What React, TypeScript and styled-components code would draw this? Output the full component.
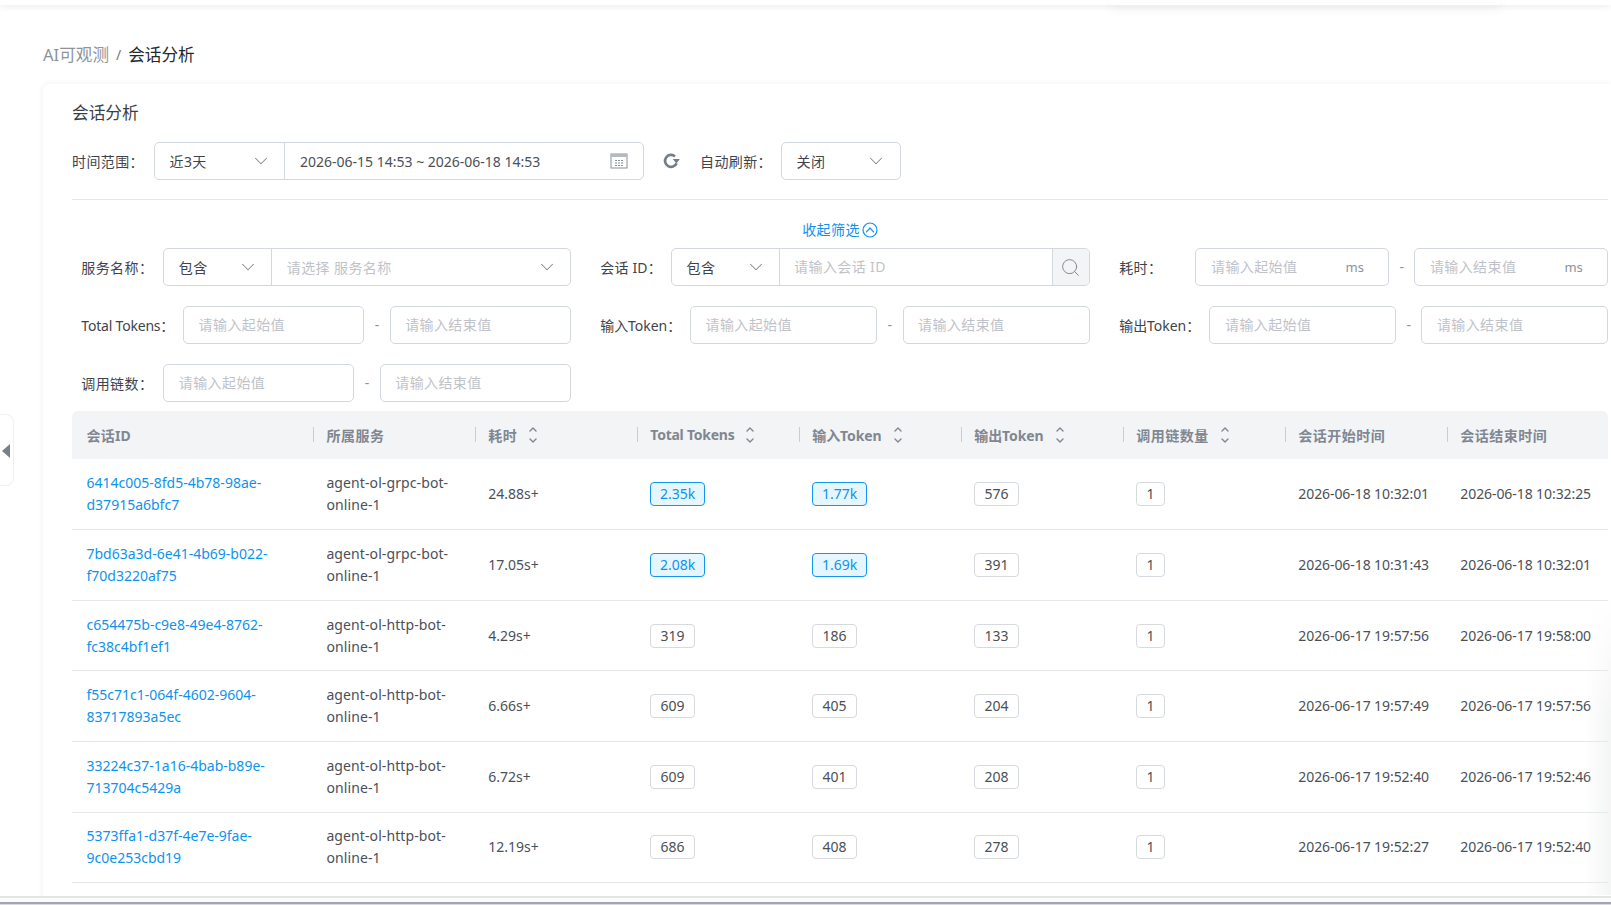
import React from 'react';
import styled, { createGlobalStyle } from 'styled-components';
import { ChevronDown, Search } from 'lucide-react';

const FONT = '"Noto Sans", "Noto Sans CJK SC", sans-serif';

const Global = createGlobalStyle`
  html, body { margin: 0; padding: 0; background: #fff; overflow: hidden; }
  * { box-sizing: border-box; }
  body { font-family: ${FONT}; font-size: 14px; color: #4b5058; }
`;

const Page = styled.div`
  position: relative;
  width: 1611px;
  height: 905px;
  display: flex;
  flex-direction: column;
  overflow: hidden;
`;
const TopBar = styled.div`
  position: relative;
  flex: none;
  height: 5px;
  background: #fff;
  box-shadow: 0 1px 7px rgba(0, 0, 0, 0.1);
  z-index: 2;
  &::after {
    content: '';
    position: absolute;
    left: 1110px;
    width: 390px;
    top: 0;
    height: 5px;
    box-shadow: 0 3px 12px rgba(0, 0, 0, 0.08);
  }
`;
const Main = styled.main`
  flex: 1;
  min-height: 0;
  padding-left: 43px;
  overflow: hidden;
`;
const Crumbs = styled.nav`
  display: flex;
  align-items: center;
  height: 24px;
  margin: 38px 0 17px;
  font-size: 16.6px;
  line-height: 24px;
  color: #8d939c;
`;
const CrumbSep = styled.span`
  margin: 0 7px;
  color: #707680;
  font-size: 14px;
`;
const CrumbNow = styled.span`
  color: #23272e;
`;
const Card = styled.section`
  height: 830px;
  padding: 17px 3px 0 29px;
  background: #fff;
  border-radius: 6px 0 0 0;
  box-shadow: 0 0 6px rgba(0, 0, 0, 0.07);
`;
const Title = styled.h2`
  margin: 0 0 17px;
  font-size: 16.7px;
  font-weight: 400;
  line-height: 24px;
  color: #3a3f46;
`;
const TimeRow = styled.div`
  display: flex;
  align-items: center;
  height: 38px;
`;
const Label = styled.label<{ $w: number; $ls?: number }>`
  flex: none;
  width: ${(p) => p.$w}px;
  padding-bottom: 1px;
  color: #3f444b;
  font-size: 14px;
  letter-spacing: ${(p) => p.$ls ?? 0.4}px;
  white-space: nowrap;
`;
const Group = styled.div<{ $w?: number }>`
  display: flex;
  height: 38px;
  border: 1px solid #d3d8de;
  border-radius: 5px;
  background: #fff;
  overflow: hidden;
  ${(p) => (p.$w ? `flex: none; width: ${p.$w}px;` : 'flex: 1; min-width: 0;')}
`;
const SelectPart = styled.div<{ $w?: number; $right?: number }>`
  display: flex;
  align-items: center;
  justify-content: space-between;
  padding: 0 ${(p) => p.$right ?? 12}px 1px 14.5px;
  color: #3f444b;
  letter-spacing: 0.4px;
  ${(p) => (p.$w ? `flex: none; width: ${p.$w}px; border-right: 1px solid #d3d8de;` : 'flex: 1;')}
  &:last-child { border-right: 0; }
`;
const Placeholder = styled.span`
  color: #bfc3c9;
`;
const DatePart = styled.div`
  flex: 1;
  display: flex;
  align-items: center;
  justify-content: space-between;
  padding: 0 15px 0 15px;
  font-size: 14px;
  color: #4b5058;
`;
const Refresh = styled.button`
  flex: none;
  display: flex;
  align-items: center;
  justify-content: center;
  width: 18px;
  height: 18px;
  margin: 0 20px 0 18px;
  padding: 0;
  border: 0;
  background: none;
`;
const Divider = styled.hr`
  height: 1px;
  margin: 19px 0 20px;
  border: 0;
  background: #e3e5e8;
`;
const Collapse = styled.button`
  display: flex;
  align-items: center;
  justify-content: center;
  gap: 2px;
  width: 100%;
  height: 20px;
  margin: 0 0 8px;
  padding: 0;
  border: 0;
  background: none;
  color: #0d93ee;
  font: 14px/20px ${FONT};
  letter-spacing: 0.4px;
`;
const Filters = styled.div`
  display: grid;
  grid-template-columns: 489.4px 489.5px 488.6px;
  column-gap: 29.5px;
  row-gap: 20px;
  padding-left: 9.3px;
`;
const Field = styled.div`
  display: flex;
  align-items: center;
  height: 38px;
  min-width: 0;
`;
const Range = styled.div`
  flex: 1;
  min-width: 0;
  display: flex;
  align-items: center;
`;
const Dash = styled.span`
  flex: none;
  width: 25.5px;
  padding-bottom: 1px;
  text-align: center;
  color: #8d939c;
`;
const InputBox = styled.div`
  flex: 1;
  min-width: 0;
  display: flex;
  align-items: center;
  height: 38px;
  padding: 0 24px 1px 14.5px;
  border: 1px solid #d3d8de;
  border-radius: 5px;
  background: #fff;
`;
const Input = styled.input`
  flex: 1;
  min-width: 0;
  width: 100%;
  border: 0;
  outline: 0;
  padding: 0;
  background: none;
  font: 14px ${FONT};
  letter-spacing: 0.4px;
  color: #3f444b;
  &::placeholder { color: #bfc3c9; opacity: 1; }
`;
const GroupInput = styled(Input)`
  padding: 0 15px 1px 14px;
  height: 100%;
`;
const Unit = styled.span`
  flex: none;
  color: #8d939c;
  font-size: 13px;
`;
const SearchBtn = styled.button`
  flex: none;
  width: 37px;
  display: flex;
  align-items: center;
  justify-content: center;
  padding: 0;
  border: 0;
  border-left: 1px solid #d3d8de;
  background: #f3f4f6;
`;
const Table = styled.div`
  margin-top: 9px;
  width: 1536px;
`;
const COLS = '241.4px 161.9px repeat(7, 162px)';
const HeadRow = styled.div`
  display: grid;
  grid-template-columns: ${COLS};
  height: 47.7px;
  margin-bottom: 1px;
  background: #f3f4f6;
  border-radius: 6px 6px 0 0;
`;
const HeadCell = styled.div<{ $first?: boolean; $ls: number }>`
  position: relative;
  display: flex;
  align-items: center;
  gap: 11px;
  padding-left: ${(p) => (p.$first ? 14.5 : 13)}px;
  font-size: 14px;
  font-weight: 700;
  letter-spacing: ${(p) => p.$ls}px;
  color: #808791;
  white-space: nowrap;
  ${(p) =>
    p.$first
      ? ''
      : `&::before {
    content: '';
    position: absolute;
    left: 0;
    top: 16px;
    height: 15px;
    width: 1px;
    background: #c9cdd3;
  }`}
`;
const Row = styled.div`
  display: grid;
  grid-template-columns: ${COLS};
  align-items: center;
  height: 70.6px;
  border-bottom: 1px solid #e5e7ea;
`;
const Cell = styled.div<{ $first?: boolean }>`
  padding: 0 12px 0 ${(p) => (p.$first ? 14.5 : 13)}px;
  line-height: 22px;
  color: #4b5058;
  overflow-wrap: anywhere;
  white-space: normal;
`;
const ServiceCell = styled(Cell)`
  letter-spacing: 0.1px;
`;
const TimeCell = styled(Cell)`
  padding-right: 0;
  letter-spacing: -0.08px;
  white-space: nowrap;
`;
const LinkText = styled.a`
  color: #0d93ee;
  text-decoration: none;
`;
const Tag = styled.span<{ $hi?: boolean }>`
  display: inline-block;
  height: 24px;
  line-height: 22px;
  padding: 0 ${(p) => (p.$hi ? 8.7 : 9.2)}px;
  border-radius: 4px;
  border: 1px solid ${(p) => (p.$hi ? '#1296ee' : '#d6d9de')};
  background: ${(p) => (p.$hi ? '#e6f6ff' : '#fff')};
  color: ${(p) => (p.$hi ? '#0d93ee' : '#4b5058')};
`;
const Handle = styled.button`
  position: absolute;
  left: 0;
  top: 414px;
  width: 14px;
  height: 72px;
  padding: 2px 0 0 2px;
  display: flex;
  align-items: center;
  background: #fff;
  border: 1px solid #eff0f2;
  border-left: 0;
  border-radius: 0 8px 8px 0;
`;
const RightFade = styled.div`
  position: absolute;
  right: 0;
  top: 600px;
  bottom: 10px;
  width: 26px;
  background: linear-gradient(to right, rgba(235, 236, 238, 0), rgba(235, 236, 238, 0.55));
  mask-image: linear-gradient(to bottom, transparent, #000 120px);
  pointer-events: none;
`;
const BottomBar = styled.div`
  flex: none;
  height: 9px;
  border-top: 2px solid #e3e4e6;
  background: linear-gradient(to bottom, #fbfbfb 0, #fbfbfb 4px, #a3a6b0 4px, #a3a6b0 6px, #d9dae1 6px);
`;

const Chevron = () => <ChevronDown size={22} color="#7f8791" strokeWidth={1.1} />;

const SortIcon = () => (
  <svg width="10" height="18" viewBox="0 0 10 18" fill="none" stroke="#7f8791" strokeWidth="1.4" strokeLinecap="round" strokeLinejoin="round">
    <path d="M2 5 L5 2 L8 5" />
    <path d="M2 13 L5 16 L8 13" />
  </svg>
);

const CalendarIcon = () => (
  <svg width="18" height="16" viewBox="0 0 18 16" fill="none">
    <rect x="1" y="1" width="16" height="14" stroke="#8a929c" strokeWidth="1" fill="#fff" />
    <rect x="1" y="1" width="16" height="3" fill="#b5bac1" />
    <path d="M5 7.5h2M8 7.5h2M11 7.5h2M5 10h2M8 10h2M11 10h2M5 12.5h2M8 12.5h2M11 12.5h2" stroke="#8a929c" strokeWidth="1" />
  </svg>
);

const RefreshIcon = () => (
  <svg width="18" height="18" viewBox="0 0 18 18" fill="none">
    <path d="M13 4.4 A6 6 0 1 0 14.6 11.2" stroke="#747d87" strokeWidth="2.7" />
    <path d="M10.8 7 L17.8 7 L14.4 11.6 Z" fill="#747d87" />
  </svg>
);

const CollapseIcon = () => (
  <svg width="16" height="16" viewBox="0 0 16 16" fill="none" stroke="#0d93ee" strokeWidth="1.2" strokeLinecap="round" strokeLinejoin="round">
    <circle cx="8" cy="8" r="7" />
    <path d="M4.4 9.8 L8 6 L11.6 9.8" />
  </svg>
);

const CaretLeft = () => (
  <svg width="8" height="14" viewBox="0 0 8 14">
    <path d="M8 0 V14 L0 7 Z" fill="#77818c" />
  </svg>
);

type RowData = {
  id: string;
  service: string;
  cost: string;
  total: string;
  input: string;
  output: string;
  chain: string;
  start: string;
  end: string;
  hi?: boolean;
};

const ROWS: RowData[] = [
  { id: '6414c005-8fd5-4b78-98ae-d37915a6bfc7', service: 'agent-ol-grpc-bot-online-1', cost: '24.88s+', total: '2.35k', input: '1.77k', output: '576', chain: '1', start: '2026-06-18 10:32:01', end: '2026-06-18 10:32:25', hi: true },
  { id: '7bd63a3d-6e41-4b69-b022-f70d3220af75', service: 'agent-ol-grpc-bot-online-1', cost: '17.05s+', total: '2.08k', input: '1.69k', output: '391', chain: '1', start: '2026-06-18 10:31:43', end: '2026-06-18 10:32:01', hi: true },
  { id: 'c654475b-c9e8-49e4-8762-fc38c4bf1ef1', service: 'agent-ol-http-bot-online-1', cost: '4.29s+', total: '319', input: '186', output: '133', chain: '1', start: '2026-06-17 19:57:56', end: '2026-06-17 19:58:00' },
  { id: 'f55c71c1-064f-4602-9604-83717893a5ec', service: 'agent-ol-http-bot-online-1', cost: '6.66s+', total: '609', input: '405', output: '204', chain: '1', start: '2026-06-17 19:57:49', end: '2026-06-17 19:57:56' },
  { id: '33224c37-1a16-4bab-b89e-713704c5429a', service: 'agent-ol-http-bot-online-1', cost: '6.72s+', total: '609', input: '401', output: '208', chain: '1', start: '2026-06-17 19:52:40', end: '2026-06-17 19:52:46' },
  { id: '5373ffa1-d37f-4e7e-9fae-9c0e253cbd19', service: 'agent-ol-http-bot-online-1', cost: '12.19s+', total: '686', input: '408', output: '278', chain: '1', start: '2026-06-17 19:52:27', end: '2026-06-17 19:52:40' },
];

const HEADERS: { t: string; ls: number; sort?: boolean }[] = [
  { t: '会话ID', ls: 0.2 },
  { t: '所属服务', ls: 0.5 },
  { t: '耗时', ls: 0.5, sort: true },
  { t: 'Total Tokens', ls: -0.25, sort: true },
  { t: '输入Token', ls: -0.1, sort: true },
  { t: '输出Token', ls: -0.1, sort: true },
  { t: '调用链数量', ls: 0.5, sort: true },
  { t: '会话开始时间', ls: 0.5 },
  { t: '会话结束时间', ls: 0.5 },
];

const RangeInputs = ({ unit }: { unit?: string }) => (
  <Range>
    <InputBox>
      <Input placeholder="请输入起始值" />
      {unit && <Unit>{unit}</Unit>}
    </InputBox>
    <Dash>-</Dash>
    <InputBox>
      <Input placeholder="请输入结束值" />
      {unit && <Unit>{unit}</Unit>}
    </InputBox>
  </Range>
);

export default function App() {
  return (
    <Page>
      <Global />
      <TopBar />
      <Main>
        <Crumbs>
          <span>AI可观测</span>
          <CrumbSep>/</CrumbSep>
          <CrumbNow>会话分析</CrumbNow>
        </Crumbs>
        <Card>
          <Title>会话分析</Title>
          <TimeRow>
            <Label $w={82}>时间范围：</Label>
            <Group $w={490}>
              <SelectPart $w={130}>
                近3天
                <Chevron />
              </SelectPart>
              <DatePart>
                2026-06-15 14:53 ~ 2026-06-18 14:53
                <CalendarIcon />
              </DatePart>
            </Group>
            <Refresh aria-label="刷新">
              <RefreshIcon />
            </Refresh>
            <Label $w={81}>自动刷新：</Label>
            <Group $w={120}>
              <SelectPart $right={13}>
                关闭
                <Chevron />
              </SelectPart>
            </Group>
          </TimeRow>
          <Divider />
          <Collapse>
            收起筛选
            <CollapseIcon />
          </Collapse>
          <Filters>
            <Field>
              <Label $w={82}>服务名称：</Label>
              <Group>
                <SelectPart $w={108}>
                  包含
                  <Chevron />
                </SelectPart>
                <SelectPart>
                  <Placeholder>请选择 服务名称</Placeholder>
                  <Chevron />
                </SelectPart>
              </Group>
            </Field>
            <Field>
              <Label $w={70.9} $ls={0.2}>会话 ID：</Label>
              <Group>
                <SelectPart $w={108}>
                  包含
                  <Chevron />
                </SelectPart>
                <GroupInput placeholder="请输入会话 ID" />
                <SearchBtn aria-label="搜索">
                  <Search size={21} color="#7c858f" strokeWidth={1.1} />
                </SearchBtn>
              </Group>
            </Field>
            <Field>
              <Label $w={76.3}>耗时：</Label>
              <RangeInputs unit="ms" />
            </Field>
            <Field>
              <Label $w={101.8} $ls={-0.2}>Total Tokens：</Label>
              <RangeInputs />
            </Field>
            <Field>
              <Label $w={89.8} $ls={-0.05}>输入Token：</Label>
              <RangeInputs />
            </Field>
            <Field>
              <Label $w={90.3} $ls={-0.05}>输出Token：</Label>
              <RangeInputs />
            </Field>
            <Field>
              <Label $w={82}>调用链数：</Label>
              <RangeInputs />
            </Field>
          </Filters>
          <Table>
            <HeadRow>
              {HEADERS.map((h, i) => (
                <HeadCell key={h.t} $first={i === 0} $ls={h.ls}>
                  {h.t}
                  {h.sort && <SortIcon />}
                </HeadCell>
              ))}
            </HeadRow>
            {ROWS.map((r) => (
              <Row key={r.id}>
                <Cell $first>
                  <LinkText>{r.id}</LinkText>
                </Cell>
                <ServiceCell>{r.service}</ServiceCell>
                <Cell>{r.cost}</Cell>
                <Cell>
                  <Tag $hi={r.hi}>{r.total}</Tag>
                </Cell>
                <Cell>
                  <Tag $hi={r.hi}>{r.input}</Tag>
                </Cell>
                <Cell>
                  <Tag>{r.output}</Tag>
                </Cell>
                <Cell>
                  <Tag>{r.chain}</Tag>
                </Cell>
                <TimeCell>{r.start}</TimeCell>
                <TimeCell>{r.end}</TimeCell>
              </Row>
            ))}
          </Table>
        </Card>
      </Main>
      <BottomBar />
      <Handle aria-label="收起侧栏">
        <CaretLeft />
      </Handle>
      <RightFade />
    </Page>
  );
}
